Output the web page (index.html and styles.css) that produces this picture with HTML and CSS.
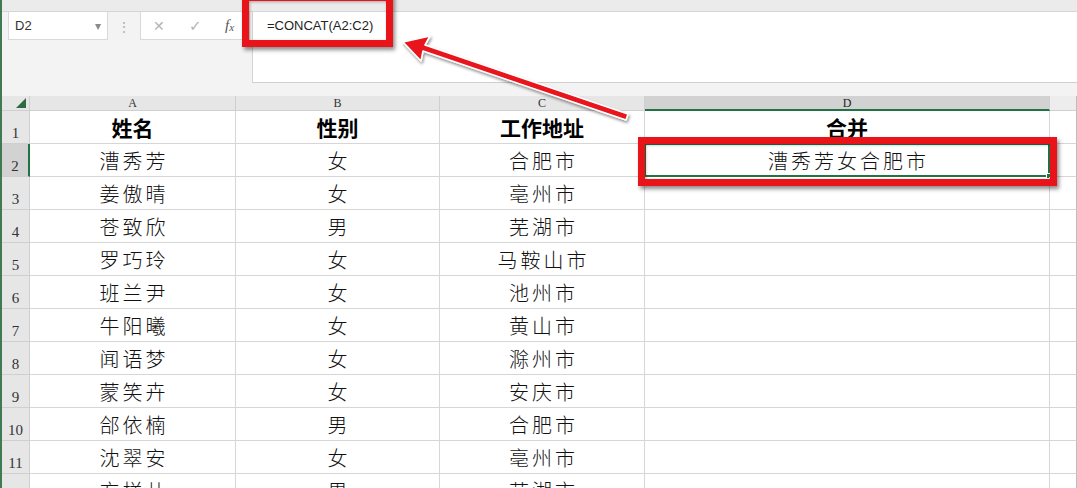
FILE: index.html
```html
<!DOCTYPE html>
<html lang="zh">
<head>
<meta charset="utf-8">
<link rel="stylesheet" href="styles.css">
</head>
<body>
<div class="app">
  <div class="toolbar">
    <div class="topstrip"></div>
    <div class="fbar">
      <div class="namebox"><span class="ref">D2</span><span class="dd">▾</span></div>
      <div class="sep">⋮</div>
      <div class="fnbox">
        <span class="fbtn x">✕</span>
        <span class="fbtn ok">✓</span>
        <span class="fbtn fx">f<sub>x</sub></span>
      </div>
      <div class="formula">=CONCAT(A2:C2)</div>
    </div>
  </div>
  <div class="sheet">
    <div class="corner"><span class="tri"></span></div>
    <div class="ch">A</div><div class="ch">B</div><div class="ch">C</div><div class="ch sel">D</div><div class="ch rest"></div>

    <div class="rh">1</div><div class="c hd">姓名</div><div class="c hd">性别</div><div class="c hd">工作地址</div><div class="c hd">合并</div><div class="c e"></div>
    <div class="rh sel">2</div><div class="c">漕秀芳</div><div class="c">女</div><div class="c">合肥市</div><div class="c active">漕秀芳女合肥市<span class="handle"></span></div><div class="c e"></div>
    <div class="rh">3</div><div class="c">姜傲晴</div><div class="c">女</div><div class="c">亳州市</div><div class="c"></div><div class="c e"></div>
    <div class="rh">4</div><div class="c">苍致欣</div><div class="c">男</div><div class="c">芜湖市</div><div class="c"></div><div class="c e"></div>
    <div class="rh">5</div><div class="c">罗巧玲</div><div class="c">女</div><div class="c">马鞍山市</div><div class="c"></div><div class="c e"></div>
    <div class="rh">6</div><div class="c">班兰尹</div><div class="c">女</div><div class="c">池州市</div><div class="c"></div><div class="c e"></div>
    <div class="rh">7</div><div class="c">牛阳曦</div><div class="c">女</div><div class="c">黄山市</div><div class="c"></div><div class="c e"></div>
    <div class="rh">8</div><div class="c">闻语梦</div><div class="c">女</div><div class="c">滁州市</div><div class="c"></div><div class="c e"></div>
    <div class="rh">9</div><div class="c">蒙笑卉</div><div class="c">女</div><div class="c">安庆市</div><div class="c"></div><div class="c e"></div>
    <div class="rh">10</div><div class="c">郃依楠</div><div class="c">男</div><div class="c">合肥市</div><div class="c"></div><div class="c e"></div>
    <div class="rh">11</div><div class="c">沈翠安</div><div class="c">女</div><div class="c">亳州市</div><div class="c"></div><div class="c e"></div>
    <div class="rh">12</div><div class="c">方样儿</div><div class="c">男</div><div class="c">芜湖市</div><div class="c"></div><div class="c e"></div>
  </div>

  <div class="redbox rb-formula"></div>
  <div class="redbox rb-cell"></div>

  <svg class="arrow" width="1077" height="488" viewBox="0 0 1077 488">
    <defs>
      <filter id="sh" x="-10%" y="-10%" width="130%" height="140%">
        <feDropShadow dx="1" dy="2" stdDeviation="1.5" flood-color="#000" flood-opacity="0.45"/>
      </filter>
    </defs>
    <path d="M403 42 L430 36 L425 45 L628 114 L626 120 L423 51 L421 61 Z" fill="#e8141a" stroke="#ffffff" stroke-width="1.6" stroke-linejoin="round" filter="url(#sh)"/>
  </svg>
</div>
</body>
</html>
```

FILE: styles.css
```css
* { box-sizing: border-box; }
html, body { margin: 0; padding: 0; }
body {
  width: 1077px;
  height: 488px;
  overflow: hidden;
  background: #f3f3f3;
  font-family: "Noto Sans CJK SC", "Liberation Sans", sans-serif;
}
.app {
  position: relative;
  width: 1077px;
  height: 488px;
  border-left: 2px solid #3f7a52;
  overflow: hidden;
}
.toolbar {
  height: 96px;
  background: #f3f3f3;
  display: flex;
  flex-direction: column;
}
.topstrip {
  height: 12px;
  background: #ebebeb;
  border-bottom: 1px solid #d6d6d6;
}
.fbar {
  display: flex;
  align-items: flex-start;
  height: 71px;
}
.namebox {
  margin-left: 6px;
  width: 100px;
  height: 28px;
  background: #fff;
  border: 1px solid #d9d9d9;
  border-top: none;
  display: flex;
  align-items: center;
  justify-content: space-between;
  padding: 0 6px 0 6px;
  font-family: "Liberation Sans", sans-serif;
  font-size: 13px;
  color: #333;
}
.dd { color: #8a8a8a; font-size: 12px; }
.sep {
  width: 32px;
  text-align: center;
  color: #b0b0b0;
  font-size: 14px;
  line-height: 28px;
}
.fnbox {
  width: 110px;
  height: 28px;
  background: #fff;
  border: 1px solid #d9d9d9;
  border-top: none;
  display: flex;
  align-items: center;
  padding-left: 12px;
  gap: 0;
}
.fbtn { color: #b4b4b4; font-size: 14px; width: 36px; font-family: "DejaVu Sans", sans-serif; }
.fbtn.ok { font-size: 15px; }
.fbtn.fx {
  color: #555;
  font-family: "Liberation Serif", serif;
  font-style: italic;
  font-size: 15px;
  width: auto;
}
.fbtn.fx sub { font-size: 11px; vertical-align: -1px; }
.formula {
  margin-left: 2px;
  flex: 1;
  height: 71px;
  background: #fff;
  border-left: 1px solid #d4d4d4;
  border-bottom: 1px solid #cfcfcf;
  padding: 6px 0 0 14px;
  font-family: "Liberation Sans", sans-serif;
  font-size: 13px;
  color: #222;
}

.sheet {
  display: grid;
  grid-template-columns: 28px 206px 204px 205px 405px 1fr;
  grid-template-rows: 15px;
  grid-auto-rows: 33px;
  background: #fff;
}
.corner {
  background: #e6e6e6;
  border-right: 1px solid #cfcfcf;
  border-bottom: 1px solid #cfcfcf;
  position: relative;
}
.tri {
  position: absolute;
  right: 3px;
  bottom: 2px;
  width: 0;
  height: 0;
  border-left: 10px solid transparent;
  border-bottom: 10px solid #2e6b45;
}
.ch {
  background: #e6e6e6;
  border-right: 1px solid #cfcfcf;
  border-bottom: 1px solid #cfcfcf;
  font-family: "Liberation Serif", serif;
  font-size: 12px;
  color: #333;
  text-align: center;
  line-height: 14px;
}
.ch.sel {
  background: #d2d2d2;
  border-bottom: 2px solid #217346;
  color: #222;
}
.ch.rest { background: #ededed; border-right: 1px solid #bdbdbd; }
.rh {
  background: #e6e6e6;
  border-right: 1px solid #cfcfcf;
  border-bottom: 1px solid #cfcfcf;
  font-family: "Liberation Serif", serif;
  font-size: 15px;
  color: #333;
  display: flex;
  align-items: flex-end;
  justify-content: center;
  padding-bottom: 1px;
}
.rh.sel {
  background: #d2d2d2;
  border-right: 2px solid #217346;
}
.c {
  border-right: 1px solid #d6d6d6;
  border-bottom: 1px solid #d6d6d6;
  display: flex;
  align-items: center;
  justify-content: center;
  font-size: 20px;
  font-weight: 300;
  letter-spacing: 3px;
  padding-left: 3px;
  color: #111;
  position: relative;
}
.c.hd {
  font-weight: 700;
  font-size: 21px;
  letter-spacing: 0;
  padding-left: 0;
  color: #000;
}
.c.e { border-right: 1px solid #bdbdbd; }
.c.active {
  border: 2px solid #217346;
  margin: -1px 0 0 -1px;
}
.handle {
  position: absolute;
  right: -4px;
  bottom: -4px;
  width: 6px;
  height: 6px;
  background: #217346;
  border: 1px solid #fff;
}

.redbox {
  position: absolute;
  border: 7px solid #e8141a;
  box-shadow: 2px 3px 4px rgba(0,0,0,0.45), inset 1px 1px 3px rgba(0,0,0,0.3);
}
.rb-formula { left: 240px; top: -6px; width: 151px; height: 53px; }
.rb-cell { left: 636px; top: 137px; width: 419px; height: 49px; }
.arrow { position: absolute; left: -2px; top: 0; pointer-events: none; }
```
